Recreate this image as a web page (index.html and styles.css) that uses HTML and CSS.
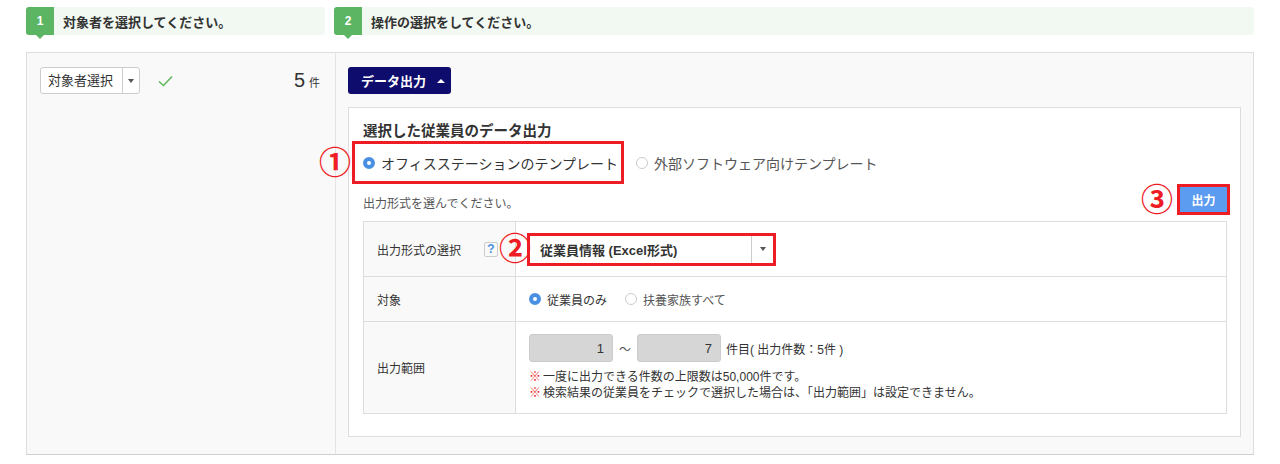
FILE: index.html
```html
<!DOCTYPE html>
<html lang="ja">
<head>
    <meta charset="UTF-8">
    <meta name="viewport" content="width=device-width, initial-scale=1.0">
    <title>データ出力</title>
    <link rel="stylesheet" href="styles.css">
</head>
<body>

<div class="page">
    <div class="steps">
        <div class="step step-first">
            <span class="step-num">1</span>
            <span class="step-text">対象者を選択してください。</span>
        </div>
        <div class="step step-second">
            <span class="step-num">2</span>
            <span class="step-text">操作の選択をしてください。</span>
        </div>
    </div>

    <div class="main">
        <div class="side">
            <div class="target-select">
                <span class="target-label">対象者選択</span>
                <span class="target-caret"><span class="caret-down"></span></span>
            </div>
            <svg class="check" width="15" height="12" viewBox="0 0 15 12">
                <polyline points="1,6.5 5.5,10.5 14,1.5" fill="none" stroke="#5cb85c" stroke-width="1.5"/>
            </svg>
            <div class="count">
                <span class="count-num">5</span>
                <span class="count-unit">件</span>
            </div>
        </div>

        <div class="content">
            <button type="button" class="export-toggle">データ出力<span class="caret-up"></span></button>

            <div class="panel">
                <h2 class="panel-title">選択した従業員のデータ出力</h2>

                <div class="template-row">
                    <label class="radio-item marked">
                        <span class="mark-num mark-left">①</span>
                        <span class="radio checked"></span>
                        <span>オフィスステーションのテンプレート</span>
                    </label>
                    <label class="radio-item">
                        <span class="radio"></span>
                        <span class="muted">外部ソフトウェア向けテンプレート</span>
                    </label>
                </div>

                <div class="format-row">
                    <p class="format-hint">出力形式を選んでください。</p>
                    <div class="output-wrap">
                        <span class="mark-num mark-left">③</span>
                        <button type="button" class="output-button">出力</button>
                    </div>
                </div>

                <table class="options">
                    <tr class="row-format">
                        <td class="label">
                            <div class="label-inner">
                                <span>出力形式の選択</span>
                                <span class="help">?</span>
                            </div>
                        </td>
                        <td class="value">
                            <div class="format-select">
                                <span class="mark-num mark-left">②</span>
                                <span class="format-text">従業員情報 (Excel形式)</span>
                                <span class="format-caret"><span class="caret-down"></span></span>
                            </div>
                        </td>
                    </tr>
                    <tr class="row-target">
                        <td class="label">対象</td>
                        <td class="value">
                            <div class="radio-group">
                                <label class="radio-item small"><span class="radio checked"></span><span>従業員のみ</span></label>
                                <label class="radio-item small"><span class="radio"></span><span class="muted">扶養家族すべて</span></label>
                            </div>
                        </td>
                    </tr>
                    <tr class="row-range">
                        <td class="label">出力範囲</td>
                        <td class="value">
                            <div class="range">
                                <input class="range-input" type="text" value="1" disabled>
                                <span class="range-sep">～</span>
                                <input class="range-input" type="text" value="7" disabled>
                                <span class="range-unit">件目( 出力件数：5件 )</span>
                            </div>
                            <p class="note"><span class="note-mark">※</span>一度に出力できる件数の上限数は50,000件です。</p>
                            <p class="note"><span class="note-mark">※</span>検索結果の従業員をチェックで選択した場合は、「出力範囲」は設定できません。</p>
                        </td>
                    </tr>
                </table>
            </div>
        </div>
    </div>
</div>

</body>
</html>
```

FILE: styles.css
```css
body {
    font-family: 'Liberation Sans', 'Noto Sans CJK JP', sans-serif;
    background-color: #ffffff;
    color: #333;
    margin: 0;
    padding: 0;
}

.page {
    width: 1228px;
    margin: 0 26px;
    padding-top: 7px;
}

/* Step headers */
.steps {
    display: flex;
    gap: 9px;
    height: 28px;
}

.step {
    display: flex;
    align-items: center;
    background-color: #f2f9f2;
    border-radius: 3px;
}

.step-first {
    width: 299px;
}

.step-second {
    flex: 1;
}

.step-num {
    position: relative;
    width: 28px;
    height: 28px;
    display: flex;
    align-items: center;
    justify-content: center;
    background-color: #5cb563;
    color: #fff;
    font-size: 12px;
    font-weight: bold;
    border-radius: 3px 0 0 3px;
}

.step-num::after {
    content: '';
    position: absolute;
    top: 100%;
    left: 10px;
    border-left: 4px solid transparent;
    border-right: 4px solid transparent;
    border-top: 4px solid #5cb563;
}

.step-text {
    margin-left: 9px;
    font-size: 13px;
    font-weight: bold;
    color: #333;
}

/* Main area */
.main {
    display: flex;
    margin-top: 17px;
    height: 403px;
    box-sizing: border-box;
    border: 1px solid #dddddd;
    border-bottom-color: #d0d0d0;
    background-color: #f9f9f9;
}

.side {
    width: 309px;
    box-sizing: border-box;
    border-right: 1px solid #e4e4e4;
    padding: 14px 15px 0 13px;
    display: flex;
    align-items: flex-start;
}

.target-select {
    display: flex;
    width: 100px;
    height: 27px;
    box-sizing: border-box;
    border: 1px solid #cccccc;
    border-radius: 3px;
    background-color: #fff;
}

.target-label {
    width: 81px;
    padding-left: 7px;
    box-sizing: border-box;
    font-size: 13px;
    line-height: 25px;
    color: #333;
}

.target-caret {
    flex: 1;
    border-left: 1px solid #cccccc;
    display: flex;
    align-items: center;
    justify-content: center;
}

.caret-down {
    display: block;
    border-left: 3.5px solid transparent;
    border-right: 3.5px solid transparent;
    border-top: 4px solid #555;
}

.check {
    margin: 8px 0 0 18px;
}

.count {
    margin-left: auto;
    margin-top: 2px;
    display: flex;
    align-items: baseline;
}

.count-num {
    font-size: 20px;
    color: #333;
}

.count-unit {
    margin-left: 4px;
    font-size: 11px;
    color: #333;
}

/* Right column */
.content {
    flex: 1;
    display: flex;
    flex-direction: column;
    padding: 14px 12px 17px 12px;
}

.export-toggle {
    align-self: flex-start;
    display: flex;
    align-items: center;
    width: 103px;
    height: 27px;
    padding: 0 0 0 13px;
    border: none;
    border-radius: 3px;
    background-color: #0e0c6d;
    color: #fff;
    font-family: inherit;
    font-size: 13px;
    font-weight: bold;
}

.caret-up {
    margin-left: 11px;
    border-left: 4px solid transparent;
    border-right: 4px solid transparent;
    border-bottom: 4px solid #fff;
}

.panel {
    flex: 1;
    margin-top: 13px;
    background-color: #fff;
    border: 1px solid #dddddd;
    padding: 14px 13px 0 14px;
}

.panel-title {
    margin: 0;
    font-size: 14.5px;
    line-height: 18px;
    font-weight: bold;
    color: #333;
}

/* Template radios */
.template-row {
    display: flex;
    align-items: center;
    height: 43px;
    margin-top: 1px;
    margin-left: -11px;
}

.radio-item {
    display: flex;
    align-items: center;
    gap: 6px;
    font-size: 14px;
    color: #333;
}

.radio-item.marked {
    position: relative;
    height: 43px;
    box-sizing: border-box;
    border: 3px solid #ee1c25;
    padding: 0 3px 0 8px;
    margin-right: 12px;
}

.muted {
    color: #555;
}

.radio {
    width: 12px;
    height: 12px;
    box-sizing: border-box;
    border-radius: 50%;
    border: 1px solid #cccccc;
    background-color: #fff;
}

.radio.checked {
    border: 4px solid #4a90e2;
}

.mark-num {
    position: absolute;
    top: 50%;
    transform: translateY(-50%);
    font-size: 32px;
    font-weight: bold;
    line-height: 1;
    color: #ee1c25;
}

.mark-left {
    right: calc(100% + 4px);
}

.format-select .mark-left {
    right: calc(100% - 1px);
}

/* Format hint + output button */
.format-row {
    display: flex;
    align-items: center;
    justify-content: space-between;
    height: 31px;
    margin-right: -3px;
}

.format-hint {
    margin: 0;
    padding-top: 5px;
    font-size: 12px;
    color: #555;
}

.output-wrap {
    position: relative;
}

.output-button {
    display: block;
    width: 53px;
    height: 31px;
    border: 3px solid #ee1c25;
    background-color: #5b9bf0;
    color: #fff;
    font-family: inherit;
    font-size: 12px;
    font-weight: bold;
    padding: 0;
}

/* Options table */
.options {
    width: 100%;
    margin-top: 6px;
    border-collapse: collapse;
    border: 1px solid #dddddd;
}

.options td {
    border: 1px solid #dddddd;
    padding: 0;
    font-size: 12px;
    color: #333;
}

.options .label {
    width: 152px;
    padding-left: 13px;
    box-sizing: border-box;
    background-color: #f9f9f9;
}

.options .value {
    padding-left: 13px;
}

.row-format {
    height: 55px;
}

.row-target {
    height: 45px;
}

.row-range {
    height: 92px;
}

.label-inner {
    display: flex;
    align-items: center;
    padding-right: 17px;
}

.help {
    margin-left: auto;
    width: 14px;
    height: 15px;
    box-sizing: border-box;
    border: 1px solid #cccccc;
    border-radius: 2px;
    color: #4a90e2;
    font-weight: bold;
    font-size: 12px;
    line-height: 13px;
    text-align: center;
}

.format-select {
    position: relative;
    display: flex;
    align-items: center;
    width: 249px;
    height: 33px;
    margin-left: -2px;
    box-sizing: border-box;
    border: 3px solid #ee1c25;
    background-color: #fff;
}

.format-text {
    flex: 1;
    padding-left: 10px;
    font-size: 13px;
    font-weight: bold;
    color: #333;
}

.format-caret {
    width: 21px;
    height: 100%;
    border-left: 1px solid #cccccc;
    display: flex;
    align-items: center;
    justify-content: center;
}

.radio-group {
    display: flex;
    gap: 18px;
}

.radio-item.small {
    font-size: 12px;
}

.range {
    display: flex;
    align-items: center;
}

.range-input {
    width: 84px;
    height: 28px;
    box-sizing: border-box;
    border: 1px solid #cccccc;
    border-radius: 3px;
    background-color: #d6d6d6;
    padding: 0 8px 0 0;
    text-align: right;
    font-family: inherit;
    font-size: 13px;
    color: #333;
}

.range-sep {
    margin: 0 6px;
    font-size: 12px;
    color: #555;
}

.range-unit {
    margin-left: 5px;
    font-size: 12px;
}

.note {
    margin: 0;
    font-size: 12px;
    line-height: 16px;
}

.range + .note {
    margin-top: 7px;
}

.note-mark {
    margin-right: 2px;
    color: #ee1c25;
}
```
